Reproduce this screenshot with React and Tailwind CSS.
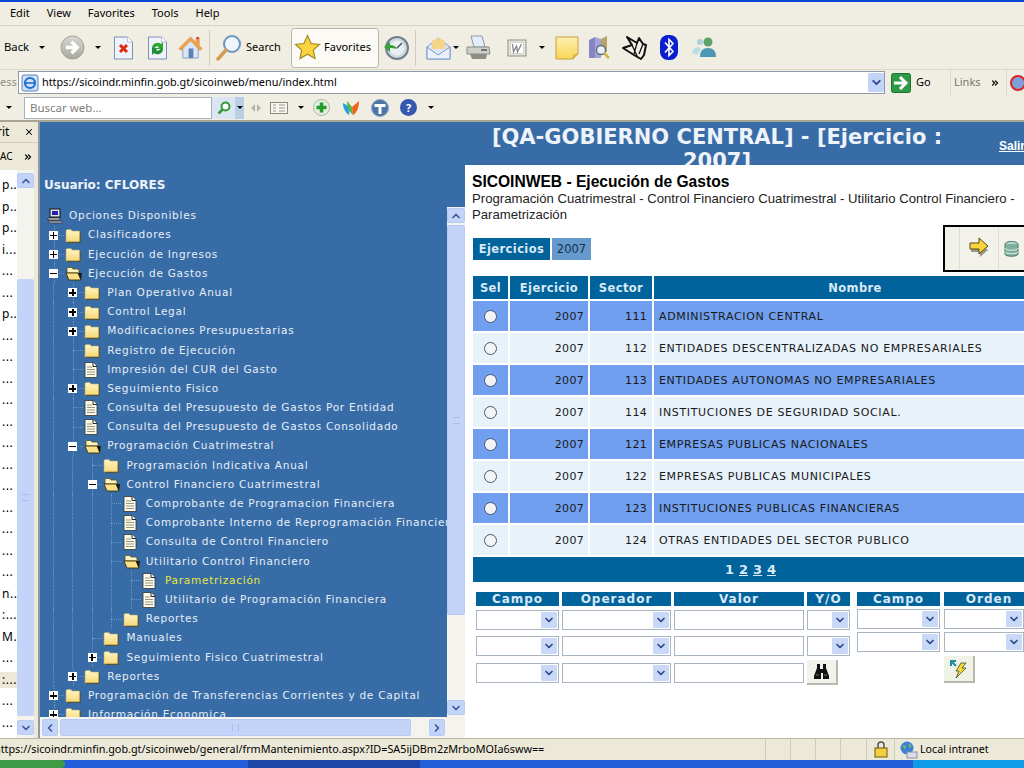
import { ChevronDown, ChevronUp, ChevronLeft, ChevronRight, X, ChevronsRight } from "lucide-react";

const treeRows = [
  { d: 0, t: "Clasificadores", tog: "+", icon: "closed" },
  { d: 0, t: "Ejecución de Ingresos", tog: "+", icon: "closed" },
  { d: 0, t: "Ejecución de Gastos", tog: "-", icon: "open" },
  { d: 1, t: "Plan Operativo Anual", tog: "+", icon: "closed" },
  { d: 1, t: "Control Legal", tog: "+", icon: "closed" },
  { d: 1, t: "Modificaciones Presupuestarias", tog: "+", icon: "closed" },
  { d: 1, t: "Registro de Ejecución", icon: "closed" },
  { d: 1, t: "Impresión del CUR del Gasto", icon: "doc" },
  { d: 1, t: "Seguimiento Fisico", tog: "+", icon: "closed" },
  { d: 1, t: "Consulta del Presupuesto de Gastos Por Entidad", icon: "doc" },
  { d: 1, t: "Consulta del Presupuesto de Gastos Consolidado", icon: "doc" },
  { d: 1, t: "Programación Cuatrimestral", tog: "-", icon: "open" },
  { d: 2, t: "Programación Indicativa Anual", icon: "closed" },
  { d: 2, t: "Control Financiero Cuatrimestral", tog: "-", icon: "open" },
  { d: 3, t: "Comprobante de Programacion Financiera", icon: "doc" },
  { d: 3, t: "Comprobante Interno de Reprogramación Financiera", icon: "doc" },
  { d: 3, t: "Consulta de Control Financiero", icon: "doc" },
  { d: 3, t: "Utilitario Control Financiero", icon: "open" },
  { d: 4, t: "Parametrización", icon: "doc", sel: true },
  { d: 4, t: "Utilitario de Programación Financiera", icon: "doc" },
  { d: 3, t: "Reportes", icon: "closed" },
  { d: 2, t: "Manuales", icon: "closed" },
  { d: 2, t: "Seguimiento Fisico Cuatrimestral", tog: "+", icon: "closed" },
  { d: 1, t: "Reportes", tog: "+", icon: "closed" },
  { d: 0, t: "Programación de Transferencias Corrientes y de Capital", tog: "+", icon: "closed" },
  { d: 0, t: "Información Economica", tog: "+", icon: "closed" },
];

const sectores = [
  ["111", "ADMINISTRACION CENTRAL"],
  ["112", "ENTIDADES DESCENTRALIZADAS NO EMPRESARIALES"],
  ["113", "ENTIDADES AUTONOMAS NO EMPRESARIALES"],
  ["114", "INSTITUCIONES DE SEGURIDAD SOCIAL."],
  ["121", "EMPRESAS PUBLICAS NACIONALES"],
  ["122", "EMPRESAS PUBLICAS MUNICIPALES"],
  ["123", "INSTITUCIONES PUBLICAS FINANCIERAS"],
  ["124", "OTRAS ENTIDADES DEL SECTOR PUBLICO"],
];

const sideTexts = ["p", "p", "p", "i", "", "", "p", "", "", "", "", "", "", "", "", "", "", "", "", "n", ":", "M", "", ":", "", ""];

const FolderClosed = () => (
  <svg width="16" height="15" viewBox="0 0 16 15">
    <defs>
      <linearGradient id="fold" x1="0" y1="0" x2="0" y2="1">
        <stop offset="0" stopColor="#fff6c4" />
        <stop offset="1" stopColor="#f8d878" />
      </linearGradient>
    </defs>
    <path d="M1 4V2.500L2 1.500h4L7 3h7l1 1v10H1z" fill="url(#fold)" stroke="#b5a56a" strokeWidth="0.6" />
    <path d="M15.200 4v10.300H2" fill="none" stroke="#4f4518" strokeWidth="0.9" />
  </svg>
);

const FolderOpen = () => (
  <svg width="18" height="15" viewBox="0 0 18 15">
    <path d="M2 7V2.500L3 1.500h4L8 3h5l1 1v3z" fill="#fff3bf" stroke="#5c4c18" strokeWidth="0.8" />
    <path d="M1 7h12l3 7H4z" fill="#fbe08a" stroke="#3d3208" strokeWidth="0.9" />
    <path d="M13 7h4l-1 7z" fill="#1c1a0c" />
  </svg>
);

const DocIcon = () => (
  <svg width="14" height="16" viewBox="0 0 14 16">
    <path d="M1 .5h8l4 4v11H1z" fill="#fdfbe8" stroke="#333" strokeWidth="0.8" />
    <path d="M9 .5v4h4" fill="#fff" stroke="#111" strokeWidth="0.9" />
    <path d="M3 5h5M3 7.500h8M3 10h8M3 12.500h8" stroke="#8a8a7a" strokeWidth="0.9" />
  </svg>
);

const PcIcon = () => (
  <svg width="16" height="16" viewBox="0 0 16 16">
    <rect x="3" y="1" width="10" height="8" fill="#dfe3ea" stroke="#111" strokeWidth="1" />
    <rect x="5" y="3" width="6" height="4" fill="#2222b8" />
    <path d="M1 10h12v2H1z" fill="#e8e8e8" stroke="#222" strokeWidth="0.8" />
    <path d="M2 13h13v2H2z" fill="#a8a8b8" stroke="#333" strokeWidth="0.6" />
  </svg>
);

const treeIcons = { closed: FolderClosed, open: FolderOpen, doc: DocIcon };

const Toggle = ({ kind }) => (
  <span className="relative z-10 flex h-[9px] w-[9px] items-center justify-center bg-white">
    <span className="absolute h-[1.500px] w-[7px] bg-black"></span>
    {kind === "+" && <span className="absolute h-[7px] w-[1.500px] bg-black"></span>}
  </span>
);

const TreeRow = ({ row }) => {
  const Icon = treeIcons[row.icon];
  const guides = Array.from({ length: row.d }, (_, i) => i);
  return (
    <div className="flex h-[19.2px] items-center whitespace-nowrap">
      {guides.map((g) => (
        <span key={g} className="flex h-full w-[19.25px] shrink-0 justify-center">
          <span className="h-full border-l border-dotted border-[#6f94bf]"></span>
        </span>
      ))}
      <span className="relative flex h-full w-[19.25px] shrink-0 items-center justify-center">
        <span className="absolute left-[9.500px] top-0 h-full border-l border-dotted border-[#6f94bf]"></span>
        <span className="absolute left-[9.500px] w-[10px] border-t border-dotted border-[#6f94bf]"></span>
        {row.tog && <Toggle kind={row.tog} />}
      </span>
      <span className="relative flex w-[24.7px] shrink-0 items-center pl-[1.500px]">
        <Icon />
      </span>
      <span className={row.sel ? "text-[#e8e83c]" : "text-[#e6eef8]"}>{row.t}</span>
    </div>
  );
};

const ScrollBtn = ({ children, className = "" }) => (
  <div className={"flex items-center justify-center rounded-[2px] border border-[#b9cbf5] bg-[#c3d4f8] text-[#3b5a9e] " + className}>
    {children}
  </div>
);

const SelectBox = ({ className = "" }) => (
  <div className={"flex h-[20px] items-center justify-end border border-[#a9b5c0] bg-white pr-px " + className}>
    <span className="flex h-[16px] w-[16px] items-center justify-center rounded-[1px] bg-[#c8d8f6] text-[#2c4a8c]">
      <ChevronDown size={12} strokeWidth={3.500} />
    </span>
  </div>
);

const TextBox = () => <div className="h-[20px] border border-[#a9b5c0] bg-white"></div>;

const FilterLabel = ({ children }) => (
  <div className="h-[14px] bg-[#00639c] text-center text-[12px] font-bold leading-[14px] tracking-[1px] text-[#dbe9f6]">
    {children}
  </div>
);

const ToolSep = () => <span className="mx-[6px] h-[36px] w-px bg-[#cfccbb]"></span>;
const DropArrow = ({ className = "" }) => (
  <span className={"h-0 w-0 border-x-[3px] border-t-[3px] border-x-transparent border-t-black " + className}></span>
);

const ArrowCircle = () => (
  <svg width="25" height="25" viewBox="0 0 26 26">
    <defs>
      <linearGradient id="gris" x1="0" y1="0" x2="0" y2="1">
        <stop offset="0" stopColor="#d8d8d2" />
        <stop offset="1" stopColor="#a8a8a0" />
      </linearGradient>
    </defs>
    <circle cx="13" cy="13" r="12" fill="url(#gris)" stroke="#a0a098" />
    <path d="M6 13h11M12 7l6 6-6 6" fill="none" stroke="#fff" strokeWidth="3.500" />
  </svg>
);
const StopIcon = () => (
  <svg width="21" height="24" viewBox="0 0 21 24">
    <path d="M1.500 1h13l5 5v17h-18z" fill="#eef2fb" stroke="#7f8fb8" />
    <path d="M14.500 1v5h5" fill="#fff" stroke="#9fb0d0" strokeWidth="0.700" />
    <path d="M7 9l7 7M14 9l-7 7" stroke="#e02a10" strokeWidth="3" />
  </svg>
);
const RefreshIcon = () => (
  <svg width="21" height="24" viewBox="0 0 21 24">
    <path d="M1.500 1h13l5 5v17h-18z" fill="#eef2fb" stroke="#7f8fb8" />
    <path d="M14.500 1v5h5" fill="#fff" stroke="#9fb0d0" strokeWidth="0.700" />
    <path d="M5 12a5.500 5.500 0 0 1 9-4l2-2v7h-6l2-2a3 3 0 0 0-4.500 1z" fill="#29a62c" />
    <path d="M16 13a5.500 5.500 0 0 1-9 4l-2 2v-7h6l-2 2a3 3 0 0 0 4.500-1z" fill="#1f8f35" />
  </svg>
);
const HomeIcon = () => (
  <svg width="25" height="25" viewBox="0 0 26 26">
    <path d="M5 12l8-8 8 8v12H5z" fill="#d8e6f6" stroke="#8ba0c4" />
    <path d="M1 14L13 2l6 6V3h3v8l3 3-2 2L13 6 3 16z" fill="#f2a24a" stroke="#cf7d2c" strokeWidth="0.600" />
    <rect x="11" y="14" width="5" height="10" fill="#5f7fb0" />
    <circle cx="20.500" cy="3" r="1.300" fill="#d23c2a" />
  </svg>
);
const SearchIcon = () => (
  <svg width="26" height="28" viewBox="0 0 26 28">
    <circle cx="16" cy="10" r="8" fill="#eef6fd" stroke="#6d93bf" strokeWidth="2" />
    <path d="M10 16l-8 9" stroke="#d39c55" strokeWidth="3.500" strokeLinecap="round" />
  </svg>
);
const StarIcon = () => (
  <svg width="27" height="27" viewBox="0 0 27 27">
    <path d="M13.500 1.500l3.600 8 8.400.9-6.200 5.700 1.700 8.400-7.500-4.300L6 24.500l1.700-8.400L1.500 10.400l8.400-.9z" fill="#fbd33e" stroke="#a08a28" strokeWidth="1.200" />
  </svg>
);
const HistoryIcon = () => (
  <svg width="26" height="26" viewBox="0 0 26 26">
    <circle cx="14" cy="13" r="11" fill="#cdd9dc" stroke="#6f7f8c" strokeWidth="2" />
    <circle cx="14" cy="13" r="7.500" fill="#e8eff2" />
    <path d="M14 13l5-5" fill="none" stroke="#445" strokeWidth="1.200" />
    <path d="M1 12l6-5v3c3 0 6 1 7 4-3-1-5-1-7-1v4z" fill="#36a03a" />
  </svg>
);
const MailIcon = () => (
  <svg width="25" height="24" viewBox="0 0 25 24">
    <path d="M1 11L12 2l12 9v12H1z" fill="#dbe6f6" stroke="#7d97c8" />
    <path d="M6 5l6-3 7 3v8H6z" fill="#f5d58a" />
    <path d="M1 11l11 8 12-8v12H1z" fill="#e9f0fb" stroke="#7d97c8" />
  </svg>
);
const PrintIcon = () => (
  <svg width="26" height="26" viewBox="0 0 26 26">
    <path d="M6 1h11l3 11H9z" fill="#e2eefa" stroke="#8d99aa" />
    <path d="M2 12h22l1 7H2z" fill="#cfcfca" stroke="#8c8c86" />
    <path d="M5 19h17l-1 5H7z" fill="#8c8c88" />
    <path d="M16 15h6" stroke="#55554f" strokeWidth="1.500" />
  </svg>
);
const WordIcon = () => (
  <svg width="20" height="18" viewBox="0 0 20 18">
    <rect x="1" y="1" width="18" height="16" fill="#e6e5dc" stroke="#8f8f88" />
    <rect x="3.500" y="3.500" width="13" height="11" fill="#fff" stroke="#b5b5ad" strokeWidth="0.500" />
    <path d="M5.500 5l1 8 3-6 1 6 4-8" fill="none" stroke="#85858a" strokeWidth="1.300" />
  </svg>
);
const NoteIcon = () => (
  <svg width="24" height="24" viewBox="0 0 24 24">
    <defs>
      <linearGradient id="nota" x1="0" y1="0" x2="0" y2="1">
        <stop offset="0" stopColor="#fdf0b0" />
        <stop offset="1" stopColor="#f9d658" />
      </linearGradient>
    </defs>
    <path d="M1 1h22v17l-5 5H1z" fill="url(#nota)" stroke="#c7a03a" />
    <path d="M18 23l1-4 4-1" fill="#f2cf62" stroke="#c7a03a" />
  </svg>
);
const BookIcon = () => (
  <svg width="24" height="25" viewBox="0 0 24 25">
    <path d="M1 5l6-3v21H1z" fill="#8585c4" />
    <path d="M7 2l6 2v19H7z" fill="#a2a2d8" />
    <path d="M13 4l6-3v16h-6z" fill="#b8a26a" />
    <circle cx="13" cy="15" r="4.500" fill="#e3eef6" stroke="#596a7d" strokeWidth="1.300" />
    <path d="M16 18l5 5" stroke="#d9b23b" strokeWidth="2.500" />
  </svg>
);
const OrigamiIcon = () => (
  <svg width="26" height="26" viewBox="0 0 26 26">
    <path d="M1 13l9-3L5 2l10 6 2-5 4 6 3 1-2 10-3 4-7-4z" fill="#f2f0e8" stroke="#111" strokeWidth="2" strokeLinejoin="round" />
    <path d="M10 10l6 13M15 8l-3 11M21 9l-4 10" stroke="#111" strokeWidth="1.300" />
  </svg>
);
const BluetoothIcon = () => (
  <svg width="20" height="27" viewBox="0 0 20 27">
    <rect x="1" y="1" width="18" height="25" rx="8" fill="#0a1ed0" />
    <path d="M6 8.500l8 9-4 4V5.500l4 4-8 9" fill="none" stroke="#fff" strokeWidth="1.600" />
  </svg>
);
const MsnIcon = () => (
  <svg width="26" height="24" viewBox="0 0 26 24">
    <circle cx="9" cy="6" r="3" fill="#a9d0dc" />
    <circle cx="17" cy="6" r="4.500" fill="#5fa36b" />
    <path d="M9 21c0-6 3-9 8-9s8 3 8 9z" fill="#4c97b5" />
    <path d="M1 17c0-3 3-6 7-6l2 3-4 5z" fill="#bcdbe2" />
  </svg>
);
const IeIcon = () => (
  <svg width="18" height="18" viewBox="0 0 18 18">
    <rect x="1" y="1" width="16" height="16" rx="2" fill="#cfe1f6" stroke="#5b80b8" />
    <circle cx="9" cy="9" r="5" fill="none" stroke="#1f6fd0" strokeWidth="2.200" />
    <path d="M4 9h10" stroke="#1f6fd0" strokeWidth="1.600" />
  </svg>
);
const GoIcon = () => (
  <svg width="20" height="20" viewBox="0 0 20 20">
    <rect x="0.500" y="0.500" width="19" height="19" rx="2" fill="#2f9a46" stroke="#1d6f30" />
    <path d="M3 10h11M9 4l6 6-6 6" fill="none" stroke="#fff" strokeWidth="3" />
  </svg>
);

const App = () => {
  return (
    <div className="flex h-[768px] w-[1024px] flex-col overflow-hidden bg-[#ece9d8] font-['Noto_Sans',sans-serif] text-[11px] text-black">
      <div className="h-[2px] shrink-0 bg-[#0a46d8]"></div>

      {/* menu */}
      <div className="flex h-[24px] shrink-0 items-center gap-[17px] border-b border-[#d8d5c4] bg-[#f0eee2] pl-[10px] text-[11px]">
        <span>Edit</span>
        <span>View</span>
        <span>Favorites</span>
        <span>Tools</span>
        <span>Help</span>
      </div>

      {/* botones */}
      <div className="flex h-[44px] shrink-0 items-center border-b border-[#dcd9c8] bg-[#f0eee2] pl-[4px]">
        <span className="w-[31px] text-[11.300px]">Back</span>
        <DropArrow className="ml-[4px] mr-[15px]" />
        <ArrowCircle />
        <DropArrow className="ml-[10px] mr-[12px] border-t-[#b8b8b0]" />
        <StopIcon />
        <span className="w-[13px]"></span>
        <RefreshIcon />
        <span className="w-[10px]"></span>
        <HomeIcon />
        <ToolSep />
        <SearchIcon />
        <span className="ml-[4px] w-[40px]">Search</span>
        <span className="ml-[5px] flex h-[40px] w-[88px] items-center gap-[3px] rounded-[3px] border border-[#b8b8a8] bg-[#fbfaf5] pl-[2px]">
          <StarIcon />
          <span>Favorites</span>
        </span>
        <span className="w-[4px]"></span>
        <HistoryIcon />
        <ToolSep />
        <span className="w-[4px]"></span>
        <MailIcon />
        <DropArrow className="ml-[2px] mr-[6px]" />
        <PrintIcon />
        <span className="w-[16px]"></span>
        <WordIcon />
        <DropArrow className="ml-[12px] mr-[10px]" />
        <NoteIcon />
        <span className="w-[9px]"></span>
        <BookIcon />
        <span className="w-[10px]"></span>
        <OrigamiIcon />
        <span className="w-[11px]"></span>
        <BluetoothIcon />
        <span className="w-[12px]"></span>
        <MsnIcon />
      </div>

      {/* direccion */}
      <div className="flex h-[25px] shrink-0 items-center bg-[#f0eee2]">
        <span className="w-[18px] shrink-0 overflow-hidden text-[#8f8f85]">ess</span>
        <div className="flex h-[23px] w-[867px] shrink-0 items-center border border-[#8f9aa8] bg-white pl-[2px]">
          <IeIcon />
          <span className="ml-[3px] flex-1 text-[10.850px]">https://sicoindr.minfin.gob.gt/sicoinweb/menu/index.html</span>
          <span className="flex h-[19px] w-[16px] items-center justify-center rounded-[1px] bg-[#c3d4f8] text-[#2c4a8c]">
            <ChevronDown size={13} strokeWidth={3.500} />
          </span>
        </div>
        <span className="ml-[6px] shrink-0"><GoIcon /></span>
        <span className="ml-[5px] w-[34px] shrink-0">Go</span>
        <span className="flex h-full w-[56px] shrink-0 items-center gap-[9px] border-l border-[#dcd9c8] pl-[3px] text-[#77776d]">
          Links
          <ChevronsRight size={10} strokeWidth={3} className="text-black" />
        </span>
        <span className="flex h-full flex-1 items-center border-l border-[#dcd9c8] pl-[3px]">
          <span className="h-[16px] w-[16px] shrink-0 rounded-full border-2 border-[#d8262a] bg-[#7f9fd8]"></span>
        </span>
      </div>

      {/* busqueda */}
      <div className="flex h-[25px] shrink-0 items-center bg-[#f0eee2]">
        <DropArrow className="ml-[6px] mr-[12px]" />
        <div className="flex h-[22px] w-[188px] items-center border border-[#a9b3bd] bg-white pl-[5px] text-[11.500px] text-[#7d7d78]">Buscar web...</div>
        <span className="flex h-[22px] w-[23px] items-center justify-center bg-[#dbe6f2]">
          <svg width="14" height="14" viewBox="0 0 14 14">
            <circle cx="8.500" cy="5.500" r="4" fill="#fff" stroke="#2e9a35" strokeWidth="2" />
            <path d="M5.500 8.500L1.500 12.500" stroke="#2e9a35" strokeWidth="2.500" />
          </svg>
        </span>
        <span className="flex h-[22px] w-[9px] items-center justify-center bg-[#b8cfe6]"><DropArrow className="border-t-[#2e9a35]" /></span>
        <svg width="12" height="12" viewBox="0 0 12 12" className="ml-[6px]">
          <path d="M5 2L1 6l4 4zM7 2l4 4-4 4z" fill="#b5b5a8" />
        </svg>
        <svg width="18" height="12" viewBox="0 0 18 12" className="ml-[8px]">
          <rect x="0.500" y="0.500" width="17" height="11" fill="#f6f5ee" stroke="#8a8a80" />
          <path d="M3 3h3M3 6h3M3 9h3M9 3h6M9 6h6M9 9h6" stroke="#9a9a90" />
        </svg>
        <DropArrow className="ml-[10px] mr-[9px]" />
        <svg width="17" height="17" viewBox="0 0 17 17">
          <circle cx="8.500" cy="8.500" r="8" fill="#e6eee2" stroke="#a5b8a0" />
          <path d="M8.500 3.500v10M3.500 8.500h10" stroke="#1f9c2a" strokeWidth="3.500" />
        </svg>
        <svg width="18" height="16" viewBox="0 0 18 16" className="ml-[12px]">
          <path d="M1 3l7 4-1 8C4 13 1 9 1 3z" fill="#2aa2dc" />
          <path d="M5 1l5 6 1 8C8 13 5 7 5 1z" fill="#5cb83a" />
          <path d="M17 1l-7 6 1 8c4-2 6-8 6-14z" fill="#ee6420" />
        </svg>
        <svg width="18" height="18" viewBox="0 0 18 18" className="ml-[11px]">
          <circle cx="9" cy="9" r="8.500" fill="#4f74a8" stroke="#8fa6c6" />
          <path d="M3.500 5h11v3h-4v7h-3V8h-4z" fill="#fff" />
        </svg>
        <span className="ml-[11px] flex h-[17px] w-[17px] items-center justify-center rounded-full bg-[#3558b0] text-[11px] font-bold leading-none text-white">?</span>
        <DropArrow className="ml-[11px]" />
      </div>

      <div className="flex min-h-0 flex-1 border-t-2 border-[#a7a493]">
        {/* lista izquierda */}
        <div className="flex w-[38px] shrink-0 flex-col bg-[#ece9d8]">
          <div className="flex h-[20px] shrink-0 items-center justify-between overflow-hidden pr-[4px] text-[12px]">
            <span className="-ml-[3px]">rit</span>
            <X size={10} strokeWidth={2.500} />
          </div>
          <div className="flex h-[28px] shrink-0 items-center justify-between border-t border-[#cfccbb] pr-[5px] text-[10px]">
            <span>AC</span>
            <ChevronsRight size={10} strokeWidth={3} />
          </div>
          <div className="flex min-h-0 flex-1 bg-white">
            <div className="flex w-[17px] flex-col gap-[5.500px] overflow-hidden pt-[7px] text-[12px] leading-[16px] tracking-[0.500px]">
              {sideTexts.map((c, i) => (
                <span key={i} className={i === 23 ? "shrink-0 whitespace-nowrap bg-[#ece9d8] pl-[2px]" : "shrink-0 whitespace-nowrap pl-[2px]"}>{c + "..."}</span>
              ))}
            </div>
            <div className="flex w-[17px] flex-col bg-[#f4f3ee] pb-[3px] pt-[3px]">
              <ScrollBtn className="h-[15px]"><ChevronUp size={12} strokeWidth={3.500} /></ScrollBtn>
              <div className="h-[91px]"></div>
              <div className="flex flex-1 items-center justify-center rounded-[2px] bg-[#c3d4f8]">
                <span className="h-[7px] w-[7px] border-y border-[#a9bde8]"></span>
              </div>
              <ScrollBtn className="mt-[4px] h-[15px]"><ChevronDown size={12} strokeWidth={3.500} /></ScrollBtn>
            </div>
            <div className="w-[4px] bg-[#ece9d8]"></div>
          </div>
        </div>

        <div className="w-[2px] shrink-0 bg-[#8f9aa5]"></div>

        {/* arbol */}
        <div className="flex min-w-0 flex-1 flex-col bg-[#386ca6]">
          <div className="flex h-[43px] shrink-0">
            <div className="w-[432px] shrink-0"></div>
            <div className="flex min-w-0 flex-1 overflow-hidden font-['DejaVu_Sans',sans-serif] text-white">
              <div className="w-[490px] shrink-0 pt-[3px] text-center text-[21px] font-bold leading-[24px] text-[#eef3f9]">
                [QA-GOBIERNO CENTRAL] - [Ejercicio : 2007]
              </div>
              <span className="ml-[37px] pt-[15px] font-['Liberation_Sans',sans-serif] text-[12px] font-bold underline">Salir</span>
            </div>
          </div>

          <div className="flex min-h-0 flex-1">
            <div className="flex w-[425px] shrink-0 flex-col">
              <div className="flex min-h-0 flex-1">
                <div className="min-w-0 flex-1 overflow-hidden font-['DejaVu_Sans',sans-serif] text-[10.500px] tracking-[0.750px]">
                  <div className="pl-[4px] pt-[12px] text-[12px] font-bold leading-[16px] tracking-normal text-[#eef3f9]">Usuario: CFLORES</div>
                  <div className="pl-[4px] pt-[13.500px]">
                    <div className="flex h-[19.2px] items-center whitespace-nowrap text-[#e6eef8]">
                      <span className="ml-[3px] w-[22px]"><PcIcon /></span>
                      Opciones Disponibles
                    </div>
                    {treeRows.map((row, i) => (
                      <TreeRow key={i} row={row} />
                    ))}
                  </div>
                </div>
                <div className="flex w-[18px] shrink-0 flex-col">
                  <div className="h-[42px] shrink-0"></div>
                  <div className="flex min-h-0 flex-1 flex-col bg-[#f4f3ee] pb-[2px] pt-[1px]">
                    <ScrollBtn className="h-[15px] shrink-0"><ChevronUp size={12} strokeWidth={3.500} /></ScrollBtn>
                    <div className="mt-[2px] flex h-[390px] shrink-0 items-center justify-center rounded-[2px] border border-[#b9cbf5] bg-[#c3d4f8]">
                      <span className="h-[7px] w-[7px] border-y border-[#a9bde8]"></span>
                    </div>
                    <div className="flex-1"></div>
                    <ScrollBtn className="h-[15px] shrink-0"><ChevronDown size={12} strokeWidth={3.500} /></ScrollBtn>
                  </div>
                </div>
              </div>
              <div className="flex h-[21px] shrink-0 items-center bg-[#f4f3ee] pl-[2px] pr-[20px]">
                <ScrollBtn className="h-[17px] w-[16px]"><ChevronLeft size={12} strokeWidth={3.500} /></ScrollBtn>
                <div className="ml-[2px] flex h-[17px] w-[352px] items-center justify-center rounded-[2px] border border-[#b9cbf5] bg-[#c3d4f8]">
                  <span className="h-[7px] w-[7px] border-x border-[#a9bde8]"></span>
                </div>
                <ScrollBtn className="ml-[18px] h-[17px] w-[16px]"><ChevronRight size={12} strokeWidth={3.500} /></ScrollBtn>
              </div>
            </div>

            {/* contenido */}
            <div className="min-w-0 flex-1 overflow-hidden bg-white pl-[7px]">
              <div className="w-[600px]">
                <div className="pt-[8px] font-['Liberation_Sans',sans-serif] text-[15.600px] font-bold leading-[18px]">SICOINWEB - Ejecución de Gastos</div>
                <div className="w-[552px] font-['Liberation_Sans',sans-serif] text-[13.150px] leading-[16px] text-[#222]">
                  Programación Cuatrimestral - Control Financiero Cuatrimestral - Utilitario Control Financiero - Parametrización
                </div>

                <div className="relative h-[53px] pt-[15px] font-['DejaVu_Sans',sans-serif] text-[11.500px]">
                  <div className="ml-[1px] flex gap-[2px]">
                    <span className="flex h-[22px] w-[77px] items-center justify-center bg-[#00639c] pt-px font-bold tracking-[0.400px] text-[#dbe9f6]">Ejercicios</span>
                    <span className="flex h-[22px] w-[39px] items-center justify-center bg-[#6699cc] pt-px text-[#14304c]">2007</span>
                  </div>
                  <div className="absolute left-[471px] top-[2px] flex h-[47px] w-[100px] items-center border-2 border-black bg-[#f2f1ea] pl-[14px]">
                    <span className="flex h-full w-[40px] items-center justify-center border-x border-[#e0dfd6]">
                      <svg width="21" height="23" viewBox="0 0 21 23">
                        <path d="M2 11h9V6l8 7-8 7v-5H2z" fill="#999990" />
                        <path d="M1 6h9V1l9 8-9 8v-5H1z" fill="#fbd33e" stroke="#554a10" strokeWidth="1" />
                      </svg>
                    </span>
                    <span className="pl-[5px]">
                      <svg width="15" height="16" viewBox="0 0 15 16" className="block">
                        <ellipse cx="7.500" cy="3" rx="6.500" ry="2.500" fill="#bcd8cc" stroke="#4a7a68" />
                        <path d="M1 3v10c0 3 13 3 13 0V3" fill="#7fb09e" stroke="#4a7a68" />
                        <path d="M1 7c0 3 13 3 13 0M1 10.500c0 3 13 3 13 0" fill="none" stroke="#dfeee8" />
                      </svg>
                    </span>
                  </div>
                </div>

                <div className="font-['DejaVu_Sans',sans-serif] text-[11px]">
                  <div className="ml-[1px] grid h-[23px] grid-cols-[35px_78px_62px_1fr] gap-x-[2px] text-[11.500px] font-bold tracking-[0.400px] text-[#dbe9f6]">
                    <span className="flex items-center justify-center bg-[#00639c] pt-[2px]">Sel</span>
                    <span className="flex items-center justify-center bg-[#00639c] pt-[2px]">Ejercicio</span>
                    <span className="flex items-center justify-center bg-[#00639c] pt-[2px]">Sector</span>
                    <span className="flex items-center justify-center bg-[#00639c] pr-[16px] pt-[2px]">Nombre</span>
                  </div>
                  {sectores.map(([cod, nombre], i) => {
                    const cell = i % 2 === 0 ? "bg-[#6f9fee]" : "bg-[#e8f2fa]";
                    return (
                      <div key={cod} className="ml-[1px] mt-[2px] grid h-[30px] grid-cols-[35px_78px_62px_1fr] gap-x-[2px] text-[#1a1a1a]">
                        <span className={"flex items-center justify-center " + cell}>
                          <span className="h-[13px] w-[13px] rounded-full border border-[#4a5a6c] bg-[#f2f4f8]"></span>
                        </span>
                        <span className={"flex items-center justify-end pr-[4px] pt-[2px] tracking-[0.300px] " + cell}>2007</span>
                        <span className={"flex items-center justify-end pr-[5px] pt-[2px] tracking-[0.300px] " + cell}>{cod}</span>
                        <span className={"flex items-center whitespace-nowrap pl-[5px] pt-[2px] tracking-[0.650px] " + cell}>{nombre}</span>
                      </div>
                    );
                  })}
                  <div className="ml-[1px] mt-[2px] flex h-[25px] items-center justify-center gap-[5px] bg-[#00639c] pr-[44px] text-[13px] font-bold text-[#dbe9f6]">
                    <span>1</span>
                    <span className="underline">2</span>
                    <span className="underline">3</span>
                    <span className="underline">4</span>
                  </div>
                </div>

                <div className="mt-[10px] flex pl-[4px] font-['DejaVu_Sans',sans-serif]">
                  <div className="grid w-[374px] grid-cols-[83px_109px_130px_43px] gap-x-[3px]">
                    <FilterLabel>Campo</FilterLabel>
                    <FilterLabel>Operador</FilterLabel>
                    <FilterLabel>Valor</FilterLabel>
                    <FilterLabel>Y/O</FilterLabel>
                    <div className="col-span-4 h-[4px]"></div>
                    <SelectBox />
                    <SelectBox />
                    <TextBox />
                    <SelectBox />
                    <div className="col-span-4 h-[6px]"></div>
                    <SelectBox />
                    <SelectBox />
                    <TextBox />
                    <SelectBox />
                    <div className="col-span-4 h-[7px]"></div>
                    <SelectBox />
                    <SelectBox />
                    <TextBox />
                    <div className="-mt-[3px] flex h-[25px] w-[31px] items-center justify-center border-b-2 border-r-2 border-[#b9b8ae] bg-[#f2f1ea]">
                      <svg width="17" height="17" viewBox="0 0 17 17">
                        <path d="M4 1h3v5h3V1h3v4l3 8v3h-6v-6H8v6H1v-3l3-8z" fill="#111" />
                        <path d="M3 12h3M11 12h3" stroke="#777" />
                      </svg>
                    </div>
                  </div>
                  <div className="ml-[7px] grid w-[180px] grid-cols-[83px_90px] content-start gap-x-[4px]">
                    <FilterLabel>Campo</FilterLabel>
                    <FilterLabel>Orden</FilterLabel>
                    <div className="col-span-2 h-[3px]"></div>
                    <SelectBox />
                    <SelectBox className="w-[80px]" />
                    <div className="col-span-2 h-[3px]"></div>
                    <SelectBox />
                    <SelectBox className="w-[80px]" />
                    <div className="col-span-2 h-[4px]"></div>
                    <div></div>
                    <div className="flex h-[27px] w-[31px] items-center justify-center border-b-2 border-r-2 border-[#b9b8ae] bg-[#eef3e6]">
                      <svg width="19" height="20" viewBox="0 0 19 20">
                        <path d="M7 7L2 2M2 7V2h5" fill="none" stroke="#1f8aa0" strokeWidth="2" />
                        <path d="M12 4h5l-4 5h4L7 19l3-7H7z" fill="#f4dc30" stroke="#444" strokeWidth="0.800" />
                      </svg>
                    </div>
                  </div>
                </div>
              </div>
            </div>
          </div>
        </div>
      </div>

      {/* estado */}
      <div className="flex h-[22px] shrink-0 items-center border-t border-[#b8b5a5] bg-[#ece9d8]">
        <span className="-ml-[6px] w-[771px] shrink-0 overflow-hidden whitespace-nowrap text-[10.800px]">https://sicoindr.minfin.gob.gt/sicoinweb/general/frmMantenimiento.aspx?ID=SA5ijDBm2zMrboMOIa6sww==</span>
        <span className="h-full w-[25px] shrink-0 border-l border-[#cfccbb]"></span>
        <span className="h-full w-[25px] shrink-0 border-l border-[#cfccbb]"></span>
        <span className="h-full w-[25px] shrink-0 border-l border-[#cfccbb]"></span>
        <span className="h-full w-[26px] shrink-0 border-l border-[#cfccbb]"></span>
        <span className="flex h-full w-[28px] shrink-0 items-center justify-center border-l border-[#cfccbb]">
          <svg width="14" height="17" viewBox="0 0 14 17">
            <path d="M4 7V4a3 3 0 0 1 6 0v3" fill="none" stroke="#555" strokeWidth="1.500" />
            <rect x="1" y="7" width="12" height="9" fill="#f2cf3c" stroke="#6a5a10" />
          </svg>
        </span>
        <span className="flex h-full flex-1 items-center gap-[2px] border-l border-[#cfccbb] pl-[4px] text-[10.700px]">
          <svg width="19" height="18" viewBox="0 0 19 18">
            <circle cx="8" cy="7" r="6.500" fill="#3e7fd8" />
            <path d="M3 4l4 1-1 4zM10 2l3 3-3 2z" fill="#6cc25a" />
            <rect x="8" y="11" width="10" height="6" fill="#d8dce6" stroke="#8a93a8" />
          </svg>
          Local intranet
        </span>
      </div>

      {/* barra de tareas */}
      <div className="flex h-[8px] shrink-0 bg-[#245edb]">
        <div className="w-[65px] rounded-r-[6px] bg-[#3f9a45]"></div>
        <div className="ml-[183px] w-[172px] rounded-t-[2px] bg-[#1b46a8]"></div>
        <div className="ml-auto w-[111px] bg-[#0f9be8]"></div>
      </div>
    </div>
  );
};

export default App;
